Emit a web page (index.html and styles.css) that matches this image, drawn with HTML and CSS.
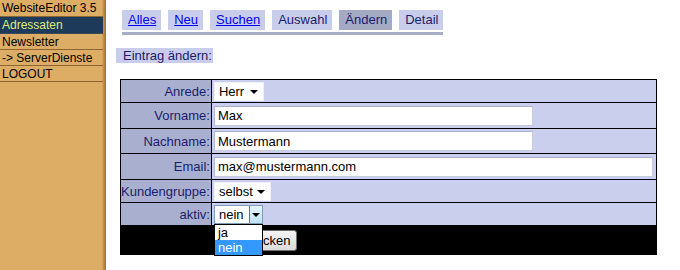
FILE: index.html
```html
<!DOCTYPE html>
<html lang="de">
<head>
  <meta charset="UTF-8">
  <title>WebsiteEditor - Adressaten</title>
  <link rel="stylesheet" href="styles.css">
</head>
<body>
  <!-- Navigation links -->
  <div class="sidebar">
    <div class="menu-title">WebsiteEditor 3.5</div>
    <a class="menu-item active" href="#">Adressaten</a>
    <a class="menu-item" href="#">Newsletter</a>
    <a class="menu-item" href="#">-&gt; ServerDienste</a>
    <a class="menu-item" href="#">LOGOUT</a>
  </div>

  <div class="content">
    <div class="tabs">
      <a class="tab" href="#">Alles</a>
      <a class="tab" href="#">Neu</a>
      <a class="tab" href="#">Suchen</a>
      <span class="tab">Auswahl</span>
      <span class="tab current">Ändern</span>
      <span class="tab">Detail</span>
    </div>

    <div class="caption">Eintrag ändern:</div>

    <!-- Formular Adressat -->
    <table class="form-table">
      <tr class="row-a">
        <td class="label">Anrede:</td>
        <td class="value"><span class="select w-anrede">Herr<span class="arrow"></span></span></td>
      </tr>
      <tr class="row-b">
        <td class="label">Vorname:</td>
        <td class="value"><input class="field" type="text" value="Max"></td>
      </tr>
      <tr class="row-c">
        <td class="label">Nachname:</td>
        <td class="value"><input class="field" type="text" value="Mustermann"></td>
      </tr>
      <tr class="row-b">
        <td class="label">Email:</td>
        <td class="value"><input class="field wide" type="text" value="max@mustermann.com"></td>
      </tr>
      <tr class="row-a">
        <td class="label">Kundengruppe:</td>
        <td class="value"><span class="select w-gruppe">selbst<span class="arrow"></span></span></td>
      </tr>
      <tr class="row-a">
        <td class="label">aktiv:</td>
        <td class="value dropdown-cell">
          <span class="select open w-aktiv">nein<span class="arrow-btn"><span class="arrow"></span></span></span>
          <div class="dropdown">
            <div class="option">ja</div>
            <div class="option selected">nein</div>
          </div>
        </td>
      </tr>
      <tr class="row-foot">
        <td class="label"></td>
        <td class="value"><button class="submit" type="button">Abschicken</button></td>
      </tr>
    </table>
  </div>
</body>
</html>
```

FILE: styles.css
```css
body {
  margin: 0;
  display: flex;
  height: 270px;
  overflow: hidden;
  font-family: "Liberation Sans", Arial, sans-serif;
  font-size: 13px;
  background-color: #fff;
}

/* Sidebar */
.sidebar {
  width: 106px;
  flex-shrink: 0;
  background: linear-gradient(to right, #ddad66 102px, #c8944c 103px, #b07a35 105px, #9c6a2c 106px);
}

.menu-title,
.menu-item {
  display: block;
  width: 103px;
  height: 16px;
  line-height: 16px;
  padding-left: 2px;
  box-sizing: border-box;
  border-bottom: 1px solid #8c6630;
  font-size: 12px;
  color: #000;
  text-decoration: none;
  white-space: nowrap;
}

.menu-title {
  height: 17px;
  line-height: 17px;
}

.menu-item.active {
  height: 17px;
  background-color: #1e3a5a;
  color: #dfec7a;
  border-bottom-color: #3b4a52;
}

/* Content */
.content {
  display: flex;
  flex-direction: column;
  align-items: flex-start;
  padding: 10px 0 0 10px;
}

.tabs {
  display: flex;
  gap: 7px;
  margin-left: 6px;
  padding-bottom: 2px;
  border-bottom: 3px solid #a7adc6;
}

.tab {
  display: block;
  height: 20px;
  line-height: 20px;
  padding: 0 5px 0 6px;
  background-color: #c8cdeb;
  color: #1c1c6c;
  text-decoration: none;
}

a.tab {
  color: #0000ee;
  text-decoration: underline;
}

.tab.current {
  background-color: #a4aac4;
}

.caption {
  margin-top: 13px;
  height: 15px;
  line-height: 15px;
  padding: 0 1px 0 7px;
  background-color: #c8cdeb;
  color: #1c1c6c;
}

/* Form table */
.form-table {
  margin: 16px 0 0 4px;
  width: 537px;
  border-collapse: collapse;
  border: 1px solid #000;
}

.form-table td {
  border: 1px solid #000;
  padding: 0 2px;
  vertical-align: middle;
  white-space: nowrap;
}

.form-table .label {
  width: 85px;
  text-align: right;
  padding-right: 1px;
  padding-left: 0;
  background-color: #a9b0cf;
  color: #1c1c6c;
}

.form-table .value {
  background-color: #c9cfec;
}

.row-a td {
  height: 22px;
}

.row-b td {
  height: 25px;
}

.row-c td {
  height: 24px;
}

.row-foot td {
  height: 28px;
  background-color: #000 !important;
}

.field {
  display: block;
  width: 319px;
  height: 20px;
  margin: 0;
  padding: 0 3px;
  box-sizing: border-box;
  border: 1px solid #c6cbdf;
  border-top-color: #a8aec6;
  border-left-color: #b4bad0;
  font-family: "Liberation Sans", Arial, sans-serif;
  font-size: 13px;
  color: #000;
  background-color: #fff;
}

.field.wide {
  width: 439px;
}

.select {
  position: relative;
  display: block;
  height: 19px;
  line-height: 18px;
  padding-left: 4px;
  box-sizing: border-box;
  border: 1px solid #f0f1f7;
  background-color: #fff;
  color: #000;
}

.w-anrede {
  width: 50px;
}

.w-gruppe {
  width: 57px;
}

.w-aktiv {
  width: 49px;
}

.arrow {
  position: absolute;
  right: 5px;
  top: 7px;
  width: 0;
  height: 0;
  border-left: 4px solid transparent;
  border-right: 4px solid transparent;
  border-top: 4px solid #000;
}

.select.open {
  border-color: #7f9db9;
}

.arrow-btn {
  position: absolute;
  right: 0;
  top: 0;
  width: 13px;
  height: 17px;
  box-sizing: border-box;
  border-left: 1px solid #3c7fb1;
  background: linear-gradient(#e6f5fd, #bfe2f6);
}

.arrow-btn .arrow {
  right: 2px;
  top: 7px;
}

/* Open dropdown list */
.dropdown-cell {
  position: relative;
}

.dropdown {
  position: absolute;
  left: 2px;
  top: 21px;
  width: 49px;
  box-sizing: border-box;
  border: 1px solid #000;
  background-color: #fff;
  z-index: 2;
}

.option {
  height: 15px;
  line-height: 15px;
  padding-left: 3px;
  color: #000;
}

.option.selected {
  background-color: #3399ff;
  color: #fff;
}

.submit {
  display: block;
  margin-left: 3px;
  height: 21px;
  padding: 0 6px;
  border: 1px solid #707070;
  border-radius: 3px;
  background: linear-gradient(#f3f3f3, #dcdcdc);
  font-family: "Liberation Sans", Arial, sans-serif;
  font-size: 13px;
  color: #000;
}
```
